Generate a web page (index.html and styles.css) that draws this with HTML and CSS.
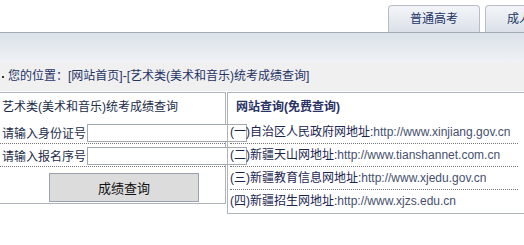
FILE: index.html
```html
<!DOCTYPE html>
<html lang="zh-CN">
<head>
    <meta charset="UTF-8">
    <meta name="viewport" content="width=device-width, initial-scale=1.0">
    <title>艺术类统考成绩查询</title>
    <link rel="stylesheet" href="styles.css">
</head>
<body>
    <div class="page">
        <div class="tabs">
            <div class="tab">普通高考</div>
            <div class="tab">成人高考</div>
        </div>
        <div class="navbar"></div>
        <div class="crumb"><span class="dot"></span>您的位置：[网站首页]-[艺术类(美术和音乐)统考成绩查询]</div>

        <div class="panels">
            <form class="query">
                <div class="query-title">艺术类(美术和音乐)统考成绩查询</div>
                <div class="field"><label>请输入身份证号:</label><input type="text"></div>
                <div class="field"><label>请输入报名序号:</label><input type="text"></div>
                <div class="actions"><button type="button">成绩查询</button></div>
            </form>
            <div class="links">
                <div class="links-title">网站查询(免费查询)</div>
                <div class="link-row">(一)自治区人民政府网地址:<span class="url">http://www.xinjiang.gov.cn</span></div>
                <div class="link-row">(二)新疆天山网地址:<span class="url">http://www.tianshannet.com.cn</span></div>
                <div class="link-row">(三)新疆教育信息网地址:<span class="url">http://www.xjedu.gov.cn</span></div>
                <div class="link-row last">(四)新疆招生网地址:<span class="url">http://www.xjzs.edu.cn</span></div>
            </div>
        </div>
    </div>
</body>
</html>
```

FILE: styles.css
```css
html, body {
    margin: 0;
    padding: 0;
    overflow: hidden;
    background: #fff;
}
body {
    font-family: "Liberation Sans", "Noto Sans CJK SC", sans-serif;
    font-size: 12px;
    color: #1e2c58;
}
.page {
    width: 580px;
}
.tabs {
    display: flex;
    justify-content: flex-end;
    gap: 5px;
    padding-right: 3px;
    padding-top: 5px;
    height: 27px;
}
.tab {
    width: 92px;
    box-sizing: border-box;
    border: 1px solid #b6bdc6;
    border-bottom: 0;
    border-radius: 4px 4px 0 0;
    background: linear-gradient(to bottom, #f3f5f8, #dbe1e8);
    color: #1d3367;
    text-align: center;
    line-height: 26px;
    font-size: 12px;
}
.navbar {
    height: 29px;
    border-top: 1px solid #a4abb3;
    background: linear-gradient(to bottom, #dce2e9, #eef1f5);
}
.crumb {
    height: 29px;
    line-height: 29px;
    background: #f0f0f0;
    color: #1f3366;
    padding-left: 2px;
    margin-bottom: 1px;
    display: flex;
    align-items: center;
    white-space: nowrap;
}
.dot {
    width: 2px;
    height: 2px;
    background: #333;
    margin-right: 4px;
}
.panels {
    display: flex;
    align-items: flex-start;
    gap: 1px;
}
.query {
    margin: 0;
    width: 225px;
    border: 1px solid #afb4ba;
    border-left: 0;
}
.query-title {
    height: 28px;
    line-height: 28px;
    padding-left: 2px;
    color: #222c4a;
    white-space: nowrap;
}
.field {
    height: 22px;
    display: flex;
    align-items: center;
    border-bottom: 1px dotted #777;
}
.field label {
    width: 85px;
    flex-shrink: 0;
    padding-left: 2px;
    white-space: nowrap;
    color: #222c4a;
}
.field input {
    flex-shrink: 0;
    width: 160px;
    height: 18px;
    box-sizing: border-box;
    margin: 1px 0 0;
    border: 1px solid #a3a9b0;
    background: #fff;
    padding: 0;
}
.actions {
    height: 36px;
    padding-top: 6px;
    box-sizing: border-box;
}
.actions button {
    margin-left: 49px;
    width: 150px;
    height: 29px;
    border: 1px solid #98a3af;
    background: #dcdcdc;
    color: #111;
    font-family: "Liberation Sans", "Noto Sans CJK SC", sans-serif;
    font-size: 13px;
    padding: 0;
}
.links {
    width: 330px;
    border: 1px solid #afb4ba;
    padding: 0 2px;
}
.links-title {
    height: 28px;
    line-height: 28px;
    padding-left: 6px;
    font-weight: bold;
    color: #2a3265;
}
.link-row {
    width: 288px;
    height: 22px;
    line-height: 22px;
    border-bottom: 1px dotted #777;
    white-space: nowrap;
    color: #1a2550;
}
.link-row.last {
    border-bottom: 0;
    height: 23px;
}
.url {
    color: #46506e;
}
```
